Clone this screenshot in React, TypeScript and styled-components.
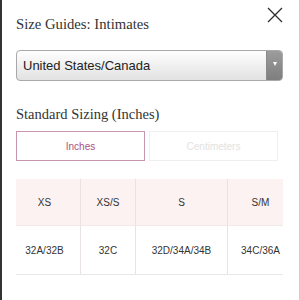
import { FunctionComponent } from 'react';
import { createGlobalStyle, styled } from 'styled-components';

const GlobalStyle = createGlobalStyle`
    body {
        margin: 0;
        background: #fff;
    }
`;

const sizes = [
    { label: 'XS', band: '32A/32B', width: 64, shift: 7 },
    { label: 'XS/S', band: '32C', width: 55, shift: 0 },
    { label: 'S', band: '32D/34A/34B', width: 92, shift: 0 },
    { label: 'S/M', band: '34C/36A', width: 66, shift: 0 },
];

const CloseIcon: FunctionComponent = () => (
    <svg width="16" height="16" viewBox="0 0 16 16">
        <path d="M1 1 L15 15 M15 1 L1 15" stroke="#2e2e2e" strokeWidth="1.3" fill="none" />
    </svg>
);

const App: FunctionComponent = () => {
    return (
        <>
            <GlobalStyle />
            <StyledPanel>
                <StyledHeader>
                    <StyledTitle>Size Guides: Intimates</StyledTitle>
                    <StyledClose aria-label="Close">
                        <CloseIcon />
                    </StyledClose>
                </StyledHeader>

                <StyledSelect>
                    <span>United States/Canada</span>
                    <StyledSelectArrow />
                </StyledSelect>

                <StyledSectionTitle>Standard Sizing (Inches)</StyledSectionTitle>

                <StyledToggleRow>
                    <StyledToggle $active>Inches</StyledToggle>
                    <StyledToggle>Centimeters</StyledToggle>
                </StyledToggleRow>

                <StyledTableWrap>
                    <StyledRow $head>
                        {sizes.map((s) => (
                            <StyledCell key={s.label} $width={s.width} $shift={s.shift}>
                                {s.label}
                            </StyledCell>
                        ))}
                    </StyledRow>
                    <StyledRow>
                        {sizes.map((s) => (
                            <StyledCell key={s.band} $width={s.width} $shift={s.shift}>
                                {s.band}
                            </StyledCell>
                        ))}
                    </StyledRow>
                </StyledTableWrap>
            </StyledPanel>
        </>
    );
};

const StyledPanel = styled.div`
    width: 300px;
    height: 300px;
    box-sizing: border-box;
    border-left: 2px solid #333;
    border-right: 1px solid #cfcfcf;
    padding: 0 16px 0 14px;
    background: #fff;
    overflow: hidden;
    display: flex;
    flex-direction: column;
`;

const StyledHeader = styled.div`
    display: flex;
    justify-content: space-between;
    align-items: flex-start;
    padding-top: 7px;
`;

const StyledTitle = styled.h2`
    margin: 8px 0 0;
    font-family: 'Liberation Serif', 'Times New Roman', serif;
    font-weight: normal;
    font-size: 14.7px;
    line-height: 18px;
    color: #333;
`;

const StyledClose = styled.button`
    border: 0;
    padding: 0;
    margin-right: 0;
    background: none;
    width: 16px;
    height: 16px;
    display: flex;
    svg {
        display: block;
    }
`;

const StyledSelect = styled.div`
    margin-top: 17px;
    height: 31px;
    box-sizing: border-box;
    border: 1px solid #a9a9a9;
    border-radius: 4px;
    background: linear-gradient(#fefefe, #e2e2e2);
    display: flex;
    align-items: center;
    justify-content: space-between;
    padding-left: 6px;
    overflow: hidden;
    font-family: 'Liberation Sans', Arial, sans-serif;
    font-size: 13px;
    color: #222;
`;

const StyledSelectArrow = styled.div`
    width: 16px;
    height: 100%;
    background: linear-gradient(#9c9c9c, #7e7e7e);
    border-left: 1px solid #8a8a8a;
    display: flex;
    align-items: center;
    justify-content: center;
    padding-bottom: 4px;
    box-sizing: border-box;
    &::after {
        content: '';
        border-left: 2.5px solid transparent;
        border-right: 2.5px solid transparent;
        border-top: 4px solid #fff;
    }
`;

const StyledSectionTitle = styled.h3`
    margin: 24px 0 0;
    font-family: 'Liberation Serif', 'Times New Roman', serif;
    font-weight: normal;
    font-size: 14.5px;
    line-height: 18px;
    color: #333;
`;

const StyledToggleRow = styled.div`
    display: flex;
    gap: 4px;
    margin-top: 8px;
`;

const StyledToggle = styled.button<{ $active?: boolean }>`
    width: 129px;
    height: 30px;
    box-sizing: border-box;
    background: #fff;
    border: 1.5px solid ${(p) => (p.$active ? '#c596ad' : '#efefef')};
    color: ${(p) => (p.$active ? '#a65385' : '#e2e2e2')};
    font-family: 'Liberation Sans', Arial, sans-serif;
    font-size: 10px;
    padding: 0;
`;

const StyledTableWrap = styled.div`
    margin-top: 18px;
    width: 267px;
    overflow: hidden;
`;

const StyledRow = styled.div<{ $head?: boolean }>`
    display: flex;
    width: max-content;
    height: ${(p) => (p.$head ? '46px' : '48px')};
    background: ${(p) => (p.$head ? '#fcf2f2' : '#fff')};
    border-bottom: 1px solid ${(p) => (p.$head ? '#f1e8e8' : '#e8e8e8')};
`;

const StyledCell = styled.div<{ $width: number; $shift: number }>`
    width: ${(p) => p.$width}px;
    box-sizing: border-box;
    padding-right: ${(p) => p.$shift}px;
    display: flex;
    align-items: center;
    justify-content: center;
    font-family: 'Liberation Sans', Arial, sans-serif;
    font-size: 10px;
    color: #333;
    & + & {
        border-left: 1px solid #e8e2e2;
    }
`;

export default App;
